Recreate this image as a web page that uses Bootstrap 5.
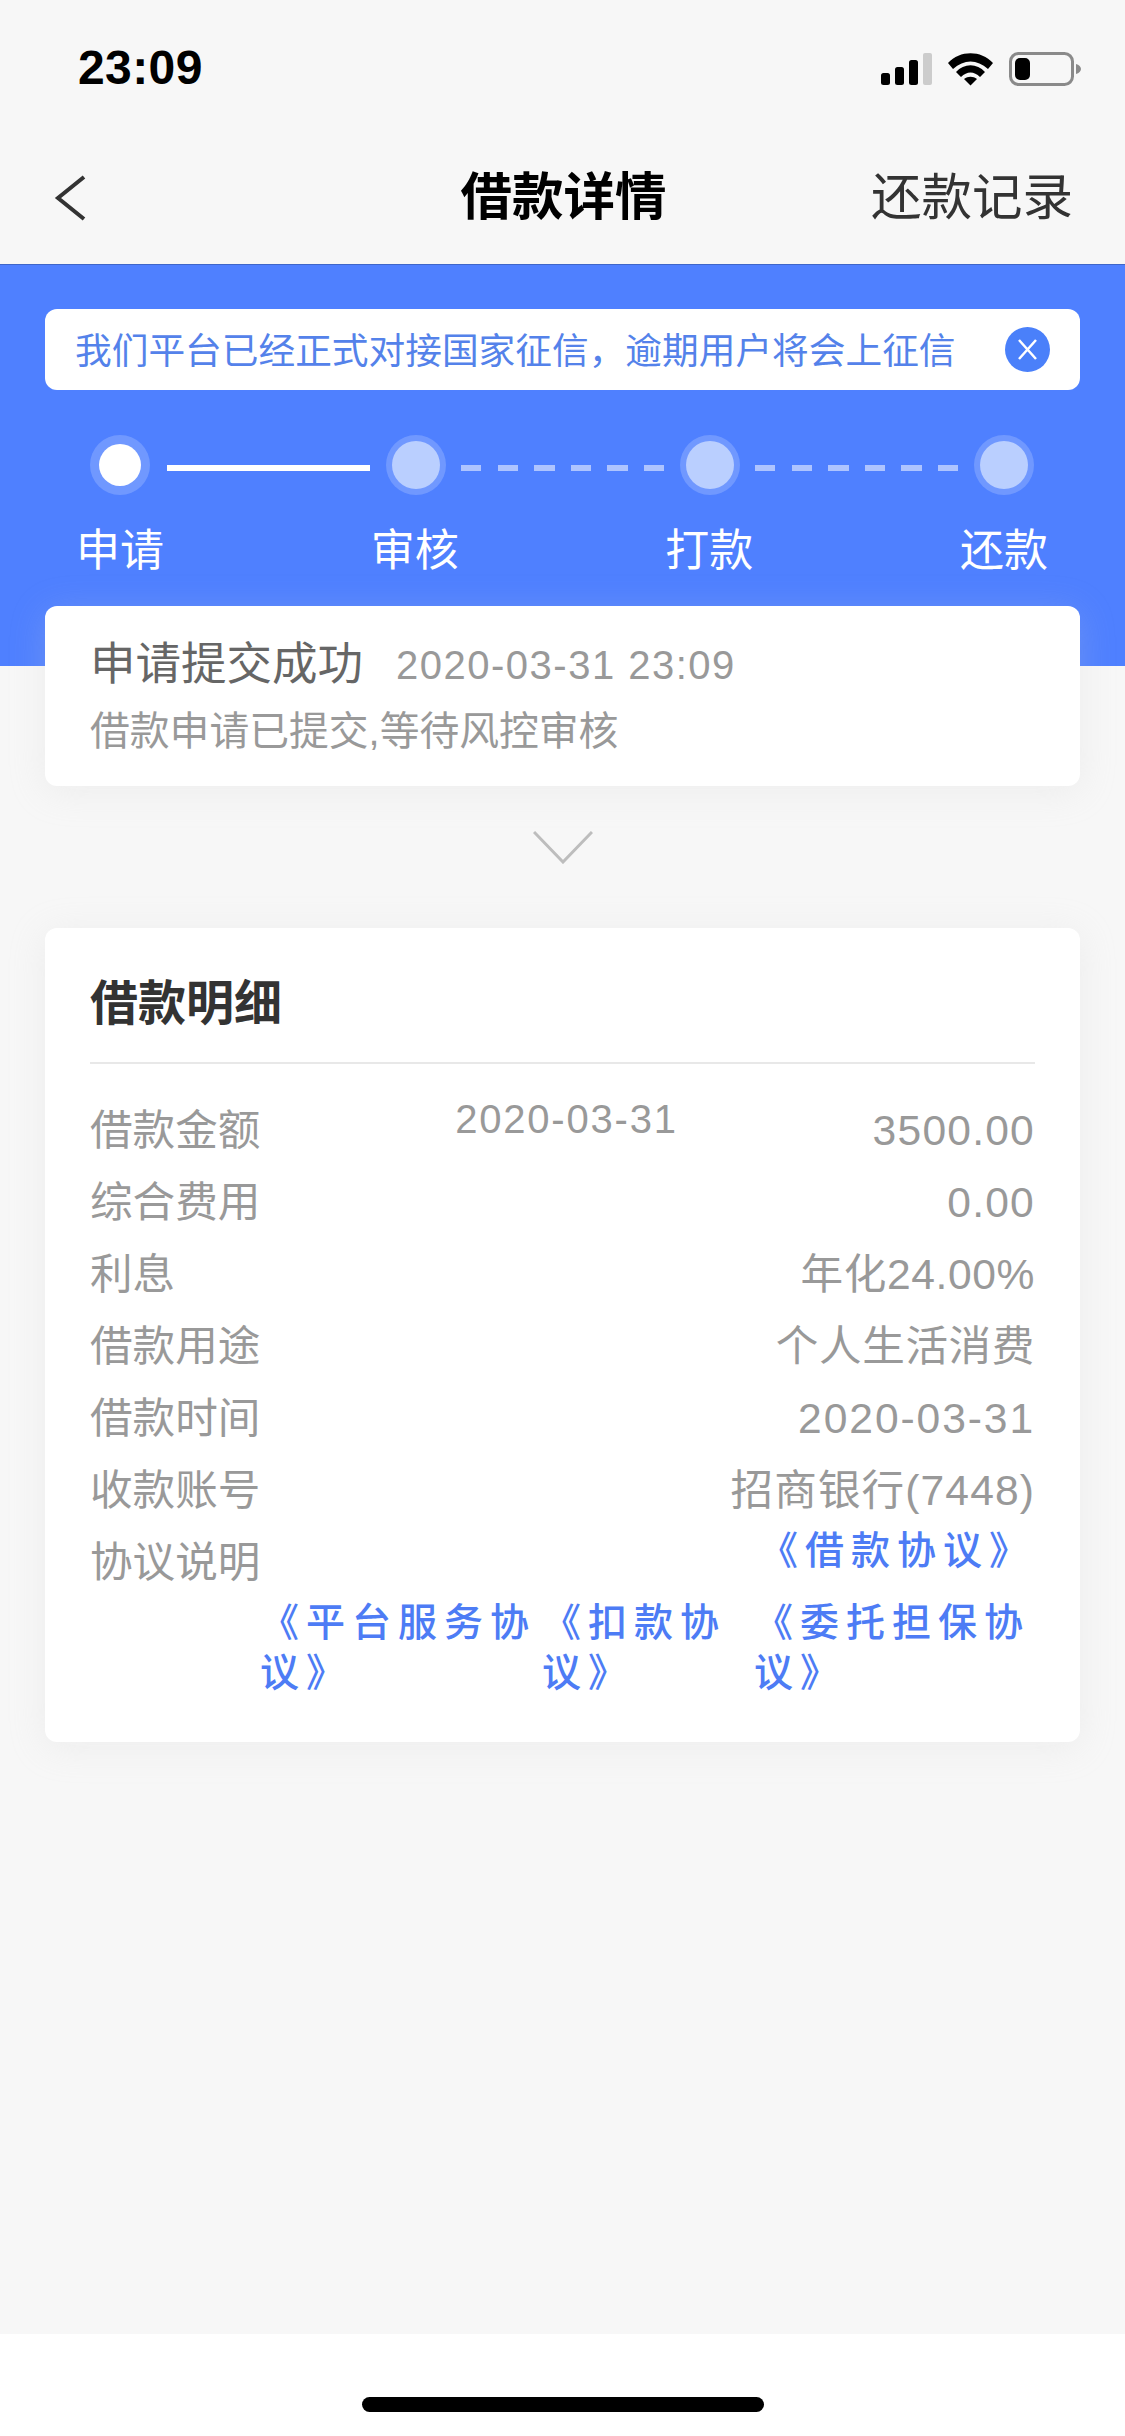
<!DOCTYPE html>
<html lang="zh-CN">
<head>
  <meta charset="UTF-8" />
  <title>借款详情</title>
  <meta name="viewport" content="width=device-width, initial-scale=1" />
  <link href="https://cdn.jsdelivr.net/npm/bootstrap@5.3.3/dist/css/bootstrap.min.css" rel="stylesheet" />
  <style>
    html, body { height: 2436px; }
    body { width: 1125px; background: #f7f7f7; font-family: "Liberation Sans", "Noto Sans CJK SC", sans-serif; color: #999; }
    .status-bar { height: 132px; padding: 0 43px 0 78px; }
    .status-time { font-size: 48px; font-weight: 700; color: #000; letter-spacing: .4px; line-height: 1; margin-top: 4px; }
    .status-icons { margin-top: 5px; }
    .title-bar { height: 133px; padding: 0 52px 0 54px; border-bottom: 1px solid #3f66c8; }
    .title-side { flex: 1 1 0; }
    .title-text { font-size: 51.5px; font-weight: 700; color: #000; line-height: 1; }
    .title-link { font-size: 50.5px; color: #333; line-height: 1; }
    .hero { height: 401px; background: #4f80ff; padding: 44px 45px 0; }
    .notice-box { height: 81px; background: #fff; border-radius: 12px; padding: 0 30px 0 30px; }
    .notice-text { font-size: 36.7px; color: #5482ea; white-space: nowrap; padding-top: 5px; }
    .stepper { margin: 45px 46px 0 45px; }
    .step-dot { width: 60px; height: 60px; border-radius: 50%; background: #7098ff; flex: none; }
    .step-dot span { display: block; width: 48px; height: 48px; border-radius: 50%; background: #bacfff; }
    .step-dot.done span { width: 42px; height: 42px; background: #fff; }
    .step-line { flex-grow: 1; height: 6px; margin: 6px 16px 0 17px; background: #fff; }
    .step-line.todo { background: repeating-linear-gradient(90deg, #aec4ff 0 20.5px, transparent 20.5px 36.6px); margin-left: 15px; }
    .step-labels { margin: 26px 32px 0 31px; }
    .step-labels div { font-size: 44px; line-height: 60px; color: #fff; }
    .status-card { height: 180px; margin: -60px 45px 0; padding: 29px 45px 0; border-radius: 12px; }
    .soft-shadow { box-shadow: 0 5px 36px rgba(205, 205, 205, .22); }
    .status-title { font-size: 45.5px; line-height: 60px; color: #666; }
    .status-time-text { font-size: 40px; line-height: 60px; letter-spacing: 1.5px; margin-left: 33px; color: #999; }
    .status-desc { font-size: 39.8px; line-height: 50px; margin-top: 11px; color: #999; white-space: nowrap; }
    .more-arrow { margin-top: 45px; }
    .detail-card { margin: 64px 45px 0; padding: 41px 45px 44px; border-radius: 12px; }
    .detail-title { font-size: 48px; font-weight: 700; line-height: 70px; color: #333; padding-bottom: 23px; border-bottom: 2px solid #e8e8e8; margin-bottom: 30px; }
    .detail-row { height: 72px; font-size: 42.6px; line-height: 72px; color: #999; }
    .detail-row .amount { letter-spacing: 1.2px; }
    .detail-row .amount-date { letter-spacing: 1.9px; }
    .detail-row .amount-text { letter-spacing: .6px; }
    .detail-row .amount-bank { letter-spacing: 1.1px; }
    .detail-date { font-size: 40px; line-height: 50px; letter-spacing: 1.8px; }
    .agree-link { font-size: 39px; line-height: 50px; letter-spacing: 7px; color: #4d7cf5; text-decoration: none; font-weight: 500; }
    .agree-wide { width: 282px; }
    .agree-narrow { width: 212px; }
    .agree-last { width: 281px; }
    .home-area { height: 102px; background: #fff; }
    .home-bar { width: 402px; height: 15px; background: #000; border-radius: 8px; margin-bottom: 24px; }
  </style>
</head>
<body class="d-flex flex-column">
  <!-- barra de estado -->
  <div class="status-bar d-flex justify-content-between align-items-center">
    <div class="status-time">23:09</div>
    <div class="status-icons d-flex align-items-center">
      <svg width="203" height="34" viewBox="0 0 203 34" xmlns="http://www.w3.org/2000/svg">
        <rect x="2" y="21" width="9" height="12" rx="2.5" fill="#000"/>
        <rect x="16" y="15" width="9" height="18" rx="2.5" fill="#000"/>
        <rect x="30" y="8" width="9" height="25" rx="2.5" fill="#000"/>
        <rect x="44" y="1" width="9" height="32" rx="2" fill="#ccc"/>
        <path d="M69 11 C81 -2 102 -2 114 11 L109 17 C98 7 85 7 74 17 Z" fill="#000"/>
        <path d="M77 20 C85 11 98 11 106 20 L101 25 C95 19 88 19 82 25 Z" fill="#000"/>
        <path d="M85 27 C89 24 94 24 98 27 L91.500 33.500 Z" fill="#000"/>
        <rect x="131.500" y="1.500" width="62" height="31" rx="8" fill="none" stroke="#8a8a8a" stroke-width="3"/>
        <rect x="136" y="6" width="15" height="22" rx="5" fill="#000"/>
        <path d="M197 12 C200 12.500 202 15 202 17 C202 19 200 21.500 197 22 Z" fill="#8a8a8a"/>
      </svg>
    </div>
  </div>

  <!-- titulo -->
  <div class="title-bar d-flex align-items-center">
    <div class="title-side">
      <svg width="34" height="46" viewBox="0 0 34 46" xmlns="http://www.w3.org/2000/svg">
        <path d="M30 2 L4 23 L30 44" fill="none" stroke="#333" stroke-width="4"/>
      </svg>
    </div>
    <div class="title-text">借款详情</div>
    <div class="title-side title-link text-end">还款记录</div>
  </div>

  <div class="hero">
    <div class="notice-box d-flex justify-content-between align-items-center">
      <div class="notice-text">我们平台已经正式对接国家征信，逾期用户将会上征信</div>
      <svg width="45" height="45" viewBox="0 0 45 45" xmlns="http://www.w3.org/2000/svg">
        <circle cx="22.500" cy="22.500" r="22.500" fill="#4a80fa"/>
        <path d="M14 13 L31 32 M31 13 L14 32" stroke="#fff" stroke-width="2.500" fill="none"/>
      </svg>
    </div>

    <div class="stepper d-flex align-items-center">
      <div class="step-dot done d-flex align-items-center justify-content-center"><span></span></div>
      <div class="step-line"></div>
      <div class="step-dot d-flex align-items-center justify-content-center"><span></span></div>
      <div class="step-line todo"></div>
      <div class="step-dot d-flex align-items-center justify-content-center"><span></span></div>
      <div class="step-line todo"></div>
      <div class="step-dot d-flex align-items-center justify-content-center"><span></span></div>
    </div>
    <div class="step-labels d-flex justify-content-between">
      <div>申请</div>
      <div>审核</div>
      <div>打款</div>
      <div>还款</div>
    </div>
  </div>

  <div class="status-card card border-0 soft-shadow">
    <div class="d-flex">
      <div class="status-title">申请提交成功</div>
      <div class="status-time-text">2020-03-31 23:09</div>
    </div>
    <div class="status-desc">借款申请已提交,等待风控审核</div>
  </div>

  <div class="more-arrow d-flex justify-content-center">
    <svg width="60" height="33" viewBox="0 0 60 33" xmlns="http://www.w3.org/2000/svg">
      <path d="M1 1 L30 31 L59 1" fill="none" stroke="#bdbdbd" stroke-width="3"/>
    </svg>
  </div>

  <div class="detail-card card border-0 soft-shadow">
    <div class="detail-title">借款明细</div>
    <div class="detail-row d-flex justify-content-between">
      <div>借款金额</div>
      <div class="detail-date">2020-03-31</div>
      <div class="amount">3500.00</div>
    </div>
    <div class="detail-row d-flex justify-content-between">
      <div>综合费用</div>
      <div class="amount">0.00</div>
    </div>
    <div class="detail-row d-flex justify-content-between">
      <div>利息</div>
      <div class="amount-text">年化24.00%</div>
    </div>
    <div class="detail-row d-flex justify-content-between">
      <div>借款用途</div>
      <div class="amount-text">个人生活消费</div>
    </div>
    <div class="detail-row d-flex justify-content-between">
      <div>借款时间</div>
      <div class="amount-date">2020-03-31</div>
    </div>
    <div class="detail-row d-flex justify-content-between">
      <div>收款账号</div>
      <div class="amount-bank">招商银行(7448)</div>
    </div>
    <div class="detail-row d-flex justify-content-between">
      <div>协议说明</div>
      <a class="agree-link" href="#">《借款协议》</a>
    </div>
    <div class="d-flex justify-content-end">
      <a class="agree-link agree-wide" href="#">《平台服务协议》</a>
      <a class="agree-link agree-narrow" href="#">《扣款协议》</a>
      <a class="agree-link agree-last" href="#">《委托担保协议》</a>
    </div>
  </div>

  <div class="flex-grow-1"></div>

  <div class="home-area d-flex justify-content-center align-items-end">
    <div class="home-bar"></div>
  </div>

  <script src="https://cdn.jsdelivr.net/npm/bootstrap@5.3.3/dist/js/bootstrap.bundle.min.js"></script>
</body>
</html>
